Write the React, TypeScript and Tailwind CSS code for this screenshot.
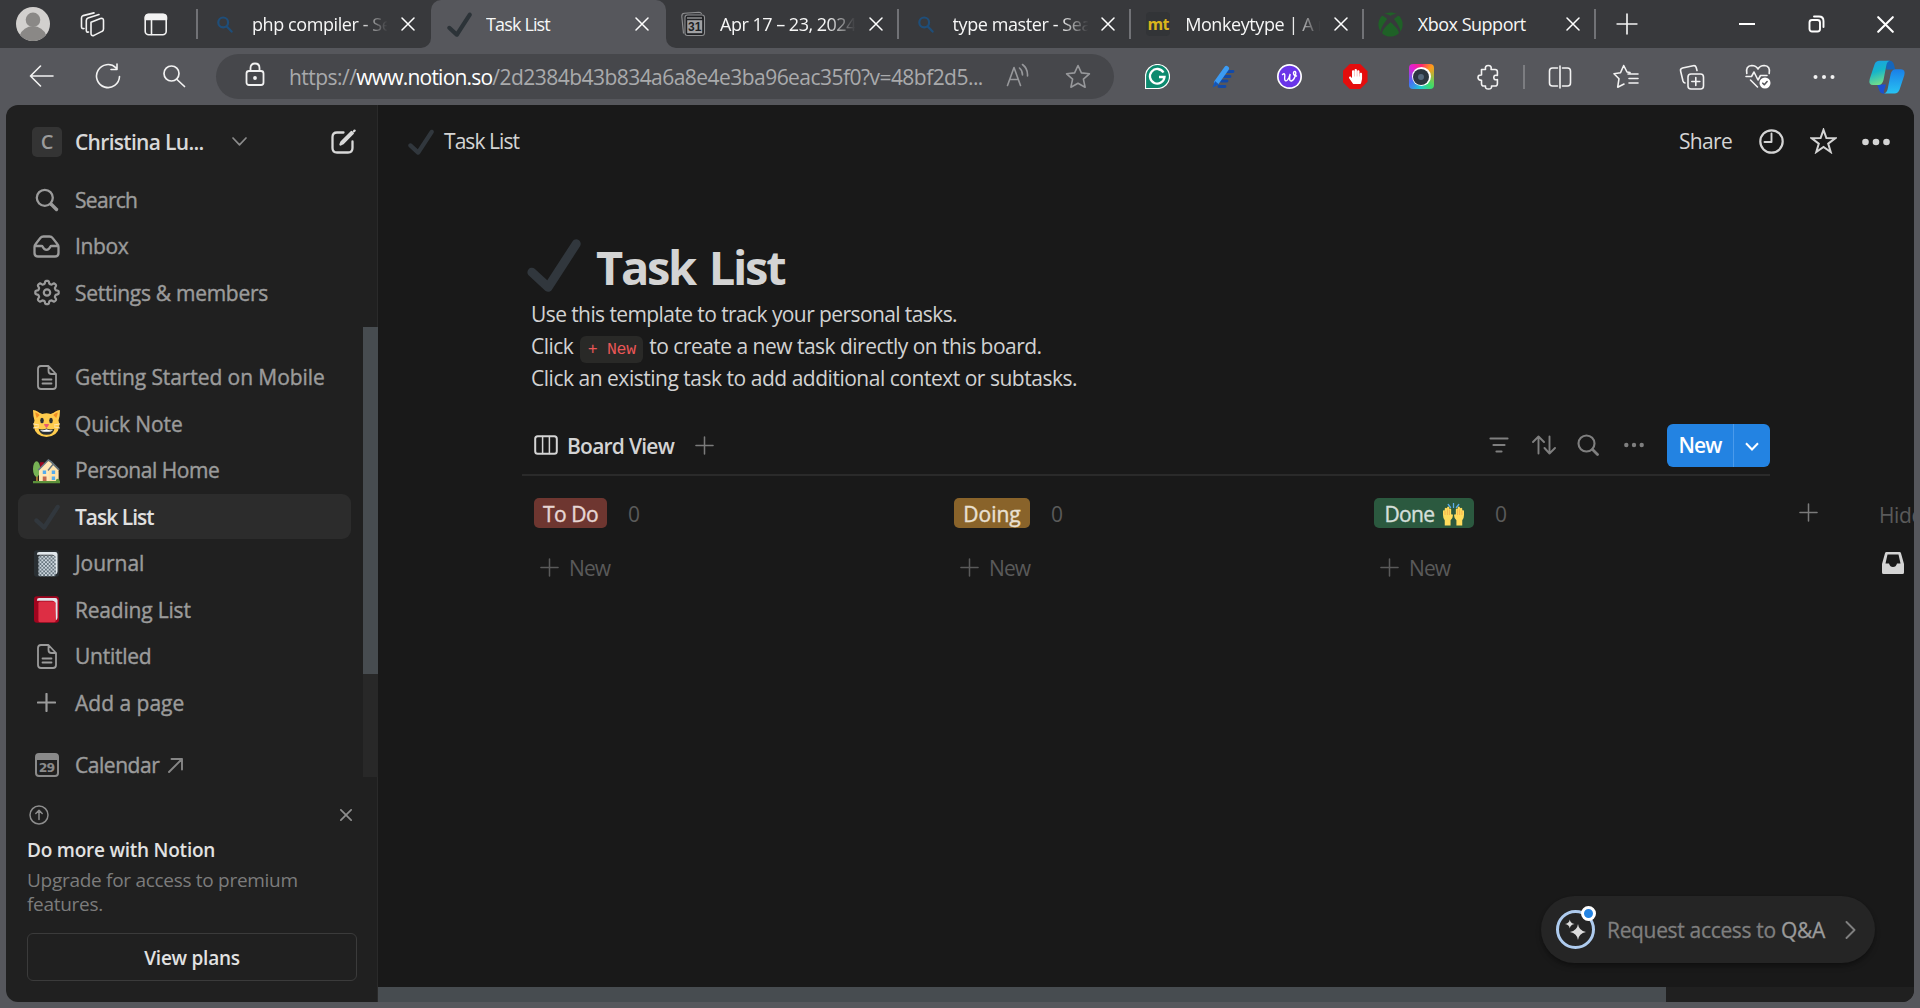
import type { ReactNode } from "react";
import { FaXbox, FaHandPaper } from "react-icons/fa";

type SvgProps = { w: number; h?: number; vb?: string; sw?: number; className?: string; children: ReactNode };

/* Outline icon with round caps; colour follows the current text colour. */
function Line({ w, h = w, vb = `0 0 ${w} ${h}`, sw = 1.6, className = "", children }: SvgProps) {
  return (
    <svg width={w} height={h} viewBox={vb} fill="none" stroke="currentColor" strokeWidth={sw} strokeLinecap="round" strokeLinejoin="round" className={`shrink-0 ${className}`}>
      {children}
    </svg>
  );
}

const Plus = ({ s, sw = 1.6 }: { s: number; sw?: number }) => (
  <Line w={s} vb="0 0 20 20" sw={sw}><path d="M10 1v18M1 10h18" /></Line>
);
const Cross = ({ s, sw = 1.5 }: { s: number; sw?: number }) => (
  <Line w={s} vb="0 0 14 14" sw={sw}><path d="M1 1l12 12M13 1L1 13" /></Line>
);
const Dots = ({ w, r, gap }: { w: number; r: number; gap: number }) => (
  <svg width={w} height={10} viewBox={`${-w / 2} -5 ${w} 10`} fill="currentColor" className="shrink-0">
    <circle cx={-gap} r={r} /><circle r={r} /><circle cx={gap} r={r} />
  </svg>
);
const Check = ({ s, className = "text-[#31373d]" }: { s: number; className?: string }) => (
  <svg width={s} height={s} viewBox="0 0 36 36" className={`shrink-0 ${className}`}>
    <path fill="currentColor" d="M34.459 1.375c-1.391-.902-3.248-.506-4.149.884L13.5 28.17l-8.198-7.58c-1.217-1.125-3.114-1.051-4.239.166-1.125 1.216-1.051 3.115.166 4.239l10.764 9.952s.309.266.452.359c.504.328 1.07.484 1.63.484.982 0 1.945-.482 2.52-1.368L35.343 5.524c.902-1.39.506-3.248-.884-4.149z" />
  </svg>
);

/* ---------- browser chrome ---------- */

const BingSearch = () => (
  <Line w={16} h={17} sw={2.2} className="text-[#1f4e79]"><circle cx="6.2" cy="6.4" r="4.9" /><path d="M9.8 10.4l4.8 5.2" /></Line>
);
const CalendarFav = () => (
  <svg width="26" height="26" viewBox="0 0 26 26" fill="none" stroke="#8e8f91" strokeWidth="1.1" className="shrink-0">
    <path d="M3.5 22.5L1.8 5.5Q1.6 2.5 4.4 2.3L19 1.2q2 0 2.6 1.8" />
    <rect x="5" y="4" width="19.500" height="20.500" rx="2.500" fill="#202124" />
    <path d="M7 7h15" strokeWidth="1.500" />
    <rect x="7.200" y="9.200" width="15" height="13" fill="#a0a1a3" stroke="none" />
    <text x="14.800" y="20.300" textAnchor="middle" fontFamily="Liberation Sans" fontWeight="bold" fontSize="12" fill="#202124" stroke="none">31</text>
  </svg>
);

function Tab({ icon, title, titleClass, active, last }: { icon: ReactNode; title: string; titleClass: string; active?: boolean; last?: boolean }) {
  return (
    <div className={`flex h-12 shrink-0 items-center ${active ? "w-[235px] rounded-t-[10px] bg-[#56575c] pl-px" : "w-[232.6px]"}`}>
      <span className="flex w-[54px] items-center justify-center">{icon}</span>
      <span className={`w-[137px] overflow-hidden whitespace-nowrap text-[18px] leading-6 text-[#f7f7f7] ${titleClass}`}>{title}</span>
      <span className="flex w-[37px] items-center justify-center text-white"><Cross s={14} /></span>
      {!active && <span className={`ml-auto h-[30px] w-[2px] ${last === false ? "" : "bg-[#717276]"}`} />}
    </div>
  );
}

function TabBar() {
  return (
    <div className="flex h-12 bg-[#56575c] text-[#f2f2f2]">
      <div className="flex w-[431px] shrink-0 items-center rounded-br-[10px] bg-[#38393c]">
        <svg width="34" height="34" viewBox="0 0 34 34" className="ml-4 shrink-0">
          <circle cx="17" cy="17" r="17" fill="#d2d0ce" />
          <circle cx="17" cy="12.800" r="7.300" fill="#8a8886" />
          <path d="M4 28a13.500 12 0 0 1 26 0a17 17 0 0 1-26 0z" fill="#8a8886" />
        </svg>
        <Line w={25} h={25} className="ml-[30px]">
          <path d="M11 10.200l9.500-3.600q3-.9 3 1.800v8.500q0 1.800-1.600 2.500l-7.900 4q-3 1-3-1.900z" />
          <path d="M8.500 20q-2.200.6-2.200-2V8.600q0-1.800 1.700-2.500L19 2.500" />
          <path d="M4 16.500q-2.500.6-2.500-2V6q0-1.800 1.700-2.400L14 .9" />
        </Line>
        <Line w={24} h={23} className="ml-[39px]">
          <rect x="1.200" y="1.200" width="21" height="20.500" rx="3.500" /><path d="M1.500 6.500V4.500q0-3 3-3h15q3 0 3 3v2z" fill="currentColor" /><path d="M7.500 7v14.500" />
        </Line>
        <span className="ml-[28px] h-[30px] w-[2px] bg-[#717276]" />
        <Tab icon={<BingSearch />} title="php compiler - Search" titleClass="tracking-[-0.42px] [mask-image:linear-gradient(to_right,#000_78%,transparent_99%)]" last={false} />
      </div>
      <div className="w-[235px] shrink-0 bg-linear-to-b from-[#38393c] from-50% to-[#56575c] to-50%">
        <Tab active icon={<Check s={25} className="text-[#2c3338]" />} title="Task List" titleClass="tracking-[-0.85px]" />
      </div>
      <div className="flex flex-1 items-center rounded-bl-[10px] bg-[#38393c]">
        <Tab icon={<CalendarFav />} title="Apr 17 – 23, 2024" titleClass="tracking-[-0.5px] [mask-image:linear-gradient(to_right,#000_78%,transparent_99%)]" />
        <Tab icon={<BingSearch />} title="type master - Search" titleClass="tracking-[-0.41px] [mask-image:linear-gradient(to_right,#000_78%,transparent_99%)]" />
        <Tab icon={<span className="flex size-6 items-center justify-center rounded bg-[#323437] text-[16px] font-bold tracking-[-0.6px] text-[#d9b51c]">mt</span>} title="Monkeytype | A minimalistic" titleClass="tracking-[-0.42px] [mask-image:linear-gradient(to_right,#000_78%,transparent_99%)]" />
        <Tab icon={<FaXbox size={25} className="text-[#1f6127]" />} title="Xbox Support" titleClass="tracking-[-0.49px]" />
        <span className="ml-[20px] flex"><Plus s={22} sw={1.5} /></span>
        <div className="ml-auto flex items-center text-white">
          <span className="mr-[53px] h-[2px] w-4 bg-white" />
          <Line w={18} h={18} sw={1.9} className="mr-[51px]"><rect x="1.500" y="5" width="10.500" height="11.500" rx="2.500" /><path d="M6 1.500h5q4.500 0 4.500 4.500v6" /></Line>
          <span className="mr-[26px] flex"><Cross s={17} sw={1.7} /></span>
        </div>
      </div>
    </div>
  );
}

const Cell = ({ children }: { children: ReactNode }) => <span className="flex w-[66px] shrink-0 items-center justify-center">{children}</span>;

function Toolbar() {
  return (
    <div className="flex h-[57px] items-center bg-[#56575c] text-[#f2f2f2]">
      <span className="flex w-[216px] shrink-0">
        <Line w={25} h={22} className="ml-[29px]"><path d="M24 11H1.500M11.500 1L1.500 11l10 10" /></Line>
        <Line w={26} h={26} className="-mt-0.5 ml-[41px]"><path d="M24.500 13.500A11.500 11.500 0 1 1 21 4.800M22 1v5.500h-6" /></Line>
        <Line w={24} h={24} sw={1.7} className="-mt-px ml-[41px]"><circle cx="9.500" cy="9.500" r="7.500" /><path d="M15 15.500l7.500 7" /></Line>
      </span>
      <div className="flex h-[45px] w-[898px] shrink-0 items-center rounded-full bg-[#46474b]">
        <Line w={20} h={25} sw={1.8} className="-mt-1 ml-[29px]"><rect x="1.500" y="9" width="17" height="14" rx="2.500" /><path d="M5.500 9V6q0-4.500 4.500-4.500T14.500 6v3" /><circle cx="10" cy="16" r="1" fill="currentColor" /></Line>
        <span className="ml-[24px] w-[717px] whitespace-nowrap text-[21px] leading-8 tracking-[-0.54px] text-[#a9aaac]">
          https://<span className="tracking-[-0.79px] text-white">www.notion.so</span>/2d2384b43b834a6a8e4e3ba96eac35f0?v=48bf2d5...
        </span>
        <Line w={24} h={24} className="-mt-1 text-[#97989b]"><path d="M1.500 22.500L8 4.500l6.500 18M3.800 16.500h8.600M13.500 5q3 2.500 3 7M16.500 1.500Q22 5.500 21.500 13" /></Line>
        <Line w={26} h={25} className="-mt-px ml-[35px] text-[#97989b]"><path d="M13 1.500l3.400 7.400 8 .9-6 5.400 1.700 8L13 19.200l-7.100 4 1.700-8-6-5.400 8-.9z" /></Line>
      </div>
      <div className="flex flex-1 items-center pl-[10px]">
        <Cell>
          <svg width="25" height="25" viewBox="0 0 25 25"><path d="M12.500.5a12 12 0 1 1 0 24H.5v-12a12 12 0 0 1 12-12z" fill="#0d8a6f" stroke="#fff" strokeWidth="1.200" /><path d="M18.500 8.500a7.300 7.300 0 1 0 1 4.500h-5.500" fill="none" stroke="#fff" strokeWidth="2.300" /></svg>
        </Cell>
        <Cell>
          <svg width="24" height="24" viewBox="0 0 24 24"><path d="M15 6.500h7M13 11.500h6M10 16h6M8 21.500h6" stroke="#124aa8" strokeWidth="2.800" strokeLinecap="round" /><path d="M15.500 3.500L5.500 17.500" stroke="#3b9bf4" strokeWidth="5" strokeLinecap="round" /><path d="M4 16l4 3.500-6.500 3z" fill="#1556b8" /></svg>
        </Cell>
        <Cell>
          <svg width="25" height="25" viewBox="0 0 25 25"><circle cx="12.500" cy="12.500" r="12.500" fill="#fff" /><circle cx="12.500" cy="12.500" r="10.800" fill="#6a35e8" /><path d="M5.500 10.500q2.500-2 2.300 1.500c-.8 6 1.800 6.500 4.200 1.500q1-2.500 1.200-3.500c-1.200 5-.5 7.500 1.300 7 3-1 5.500-8.500 3.500-9.500-2-.5-2.500 4 1.500 4.500" fill="none" stroke="#fff" strokeWidth="1.400" strokeLinecap="round" /></svg>
        </Cell>
        <Cell>
          <span className="flex size-[25px] items-center justify-center bg-[#e40d0d] text-white [clip-path:polygon(29%_0,71%_0,100%_29%,100%_71%,71%_100%,29%_100%,0_71%,0_29%)]"><FaHandPaper size={15} /></span>
        </Cell>
        <Cell>
          <span className="flex size-[25px] items-center justify-center rounded bg-[conic-gradient(from_45deg,#ff9a1a,#3ddc6a_25%,#1fc8d8_40%,#4a6cf5_55%,#e31fd0_75%,#ff2a6a_88%,#ff9a1a)]">
            <span className="flex size-[19px] items-center justify-center rounded-full bg-white"><span className="flex size-[16px] items-center justify-center rounded-full bg-[#2c3640]"><span className="size-[6px] rounded-full bg-[#56697c]" /></span></span>
          </span>
        </Cell>
        <Cell>
          <Line w={24} h={26} className="ml-[3px]"><path d="M4.500 5.500h4q-.8-4 2.800-4t2.800 4h4q2.300 0 2.300 2.300v3.700q-3.600-1-3.600 2t3.600 2v4.200q0 2.300-2.300 2.300h-3.600q.6 3-3 3t-3-3H6.800q-2.300 0-2.300-2.300v-3.500Q1 16.200 1 13.500t3.500-2.500z" /></Line>
        </Cell>
        <span className="mr-0.5 ml-[3px] h-6 w-[2px] bg-[#7c7d81]" />
        <Cell><Line w={24} h={24}><path d="M9.500 3H4.500q-3 0-3 3v12q0 3 3 3h5M14.500 3h5q3 0 3 3v12q0 3-3 3h-5M12 1v22" /></Line></Cell>
        <Cell><Line w={26} h={25}><path d="M17 8.500l-3-.5-3.300-6.500L7.500 8.800l-6.500.9 5 5-1.300 8.500 6.300-3.200M15 10h10M16 14.500h9M16 19h9" /></Line></Cell>
        <Cell><Line w={26} h={26}><rect x="9" y="10" width="15.500" height="15" rx="3" /><path d="M16.800 13.500v8M12.800 17.500h8M18 6.500l-.8-3q-.7-2.300-3-1.800L3.500 4Q1 4.800 1.600 7l2.400 10q.5 1.800 2 2" /></Line></Cell>
        <Cell>
          <Line w={26} h={25}><path d="M1.800 9.500q-1.500-7.500 5-8Q11 1.500 13 5q2-3.500 6.200-3.500 6.500.5 5 8M1 12.500h5.500L9 8l4 8 2.500-4.500H22M5.500 16l7 7" /><circle cx="20" cy="19" r="5.500" fill="#fff" stroke="none" /><path d="M17.800 19.200l1.500 1.500 2.800-3.200" stroke="#56575c" /></Line>
        </Cell>
        <Cell><Dots w={26} r={2} gap={8.500} /></Cell>
        <span className="flex w-[60px] shrink-0 items-center justify-center">
          <svg width="38" height="34" viewBox="0 0 38 34">
            <defs>
              <linearGradient id="cpA" x1="0" y1="0" x2=".3" y2="1"><stop offset="0" stopColor="#1b9de8" /><stop offset=".5" stopColor="#16b6c9" /><stop offset="1" stopColor="#6fdc8c" /></linearGradient>
              <linearGradient id="cpB" x1="0" y1="0" x2="0" y2="1"><stop offset="0" stopColor="#1a7fe8" /><stop offset="1" stopColor="#27c3f3" /></linearGradient>
            </defs>
            <path d="M18 .8h4q3 .3 4 4l1.300 4.700h-9z" fill="#1566bb" />
            <path d="M9 24.500h9l-2 6q-.8 3 2 3h-3q-3 0-4-4z" fill="#1c50cf" />
            <path d="M11.500.8H22q-2.800.6-3.600 4.200L15.500 20q-1.300 5-5 5H5q-4.700 0-3.300-6L6.500 4.500Q7.800.8 11.500.8z" fill="url(#cpA)" />
            <path d="M26.500 33.500H16q2.800-.6 3.600-4.200l3-15q1.200-5 5-5H33q4.700 0 3.300 6l-4.800 14.500q-1.300 3.700-5 3.700z" fill="url(#cpB)" />
          </svg>
        </span>
      </div>
    </div>
  );
}

/* ---------- sidebar ---------- */

const GEAR = Array.from({ length: 145 }, (_, i) => {
  const a = (i / 144) * Math.PI * 2;
  const r = 10.3 + 1.45 * Math.tanh(2.2 * Math.cos(8 * a));
  return `${i ? "L" : "M"}${(13 + r * Math.sin(a)).toFixed(2)} ${(13.5 - r * Math.cos(a)).toFixed(2)}`;
}).join("");

const PageIcon = () => (
  <Line w={20} h={25} sw={1.8}><path d="M4 1h7.500l7.500 8v12q0 3-3 3H4q-3 0-3-3V4q0-3 3-3zM11.500 1.500V6q0 3 3 3H19M5.500 14.500h9M5.500 18.500h9" /></Line>
);
const CatIcon = () => (
  <svg width="27" height="27" viewBox="0 0 36 36">
    <path d="M1 1q5 0 10 4.500L5 14Q1 8 1 1zM35 1q-5 0-10 4.500L31 14q4-6 4-13z" fill="#f18f26" />
    <path d="M0 0q3 0 7.500 3.200l5 2Q18 3.500 23.500 5.200l5-2Q33 0 36 0q0 8-2 14 1.500 4 1 8-2 13-17 14Q3 35 1 22q-.5-4 1-8Q0 8 0 0zm3 3q.3 4 2 7.500L9 6.500Q6 4 3 3zm30 0q-3 1-6 3.500l4 4Q32.700 7 33 3z" fill="#ffcc4d" />
    <ellipse cx="12" cy="14" rx="2.400" ry="3.700" fill="#292f33" /><ellipse cx="24" cy="14" rx="2.400" ry="3.700" fill="#292f33" />
    <path d="M15.500 19.500h5L18 23z" fill="#e75a70" stroke="#e75a70" strokeLinejoin="round" strokeWidth="1.500" />
    <path d="M7.500 25q5 2 10.500-.5 5.500 2.500 10.500.5-1 8-10.500 8T7.500 25z" fill="#292f33" />
    <path d="M9.500 26.500q4.500 1 8.500-1 4 2 8.500 1-1 2.500-8.500 2.500t-8.500-2.500z" fill="#fff" />
    <path d="M0 18.500l8 1.500M0 24l8-1.500M36 18.500L28 20M36 24l-8-1.500" stroke="#fee7b8" strokeWidth="1.300" />
  </svg>
);
const HouseIcon = () => (
  <svg width="27" height="27" viewBox="0 0 36 36">
    <path d="M4 22h2.500v11H4z" fill="#a0702c" /><ellipse cx="4.800" cy="16" rx="4.800" ry="10.500" fill="#77b255" />
    <path d="M9.500 7h5v8h-5z" fill="#a0041e" />
    <path d="M8 16L19 5l3.500 1L34 17.500V33H8z" fill="#ffe8b6" />
    <path d="M21 19l5-6.500 8 7.500v13H21z" fill="#ffdb9a" opacity=".5" />
    <path d="M7 17.500L20.500 4l4 2.500L35 17M20 18l6.500-8" fill="none" stroke="#66757f" strokeWidth="1.900" />
    <path d="M13 18h4.500v4.500H13zM25 18h4.500v4.500H25zM25 26h4.500v4.500H25z" fill="#55acee" />
    <path d="M13 26h5v7h-5z" fill="#c1694f" /><path d="M0 32h36v3H0z" fill="#5c913b" /><circle cx="33" cy="31.500" r="2.500" fill="#5c913b" />
  </svg>
);
function BookIcon({ journal }: { journal?: boolean }) {
  return (
    <svg width="25" height="27" viewBox="0 0 34 36">
      <defs>
        <pattern id="weave" width="5" height="5" patternUnits="userSpaceOnUse"><path fill="#ccd6dd" d="M0 0h5v5H0z" /><path fill="#66757f" d="M0 0h2.500v2.500H0zM2.500 2.500H5V5H2.500z" /></pattern>
      </defs>
      <rect x="0" y="0" width="34" height="36" rx="4" fill={journal ? "#292f33" : "#a0041e"} />
      <path d="M4 5.500Q4 2.500 7 2.500h22q3 0 3 3V29q0 3-2.500 4L28 8.500Q28 6 25 6H4z" fill="#e1e8ed" />
      <rect x="6" y="7" width="23.500" height="28.500" rx="2.500" fill={journal ? "url(#weave)" : "#dd2e44"} />
    </svg>
  );
}

function Row({ icon, label, cls = "", active, after }: { icon: ReactNode; label: string; cls?: string; active?: boolean; after?: ReactNode }) {
  return (
    <div className={`mb-[1.5px] flex h-[45px] w-[333px] items-center rounded-[9px] text-[21px] leading-[30px] whitespace-nowrap ${active ? "bg-[#2c2c2c] font-semibold text-[#e0e0e0]" : "text-[#9b9b9b] [-webkit-text-stroke:0.4px_#9b9b9b]"}`}>
      <span className="flex w-[57px] shrink-0 items-center justify-center">{icon}</span>
      <span className={cls}>{label}</span>
      {after}
    </div>
  );
}

function Sidebar() {
  return (
    <aside className="flex w-[372px] shrink-0 flex-col border-r border-[#2a2a2a] bg-[#202020]">
      <div className="flex h-[72px] items-center pl-[26px]">
        <span className="mt-0.5 flex size-[30px] items-center justify-center rounded-[5px] bg-[#343434] text-[20px] font-semibold text-[#9b9b9b]">C</span>
        <span className="mt-[3px] ml-[13px] text-[21px] font-semibold tracking-[-0.69px] text-[#d8d8d8]">Christina Lu...</span>
        <Line w={15} h={9} sw={1.7} className="mt-px ml-[28px] text-[#8b8b8b]"><path d="M1 1l6.500 6.800L14 1" /></Line>
        <Line w={25} h={25} sw={2.300} className="ml-[84px] text-[#d8d8d8]"><path d="M12.500 3.500H6q-4.500 0-4.500 4.500v11q0 4.500 4.500 4.500h11q4.500 0 4.500-4.500v-6.500M9.500 15.500l1-2.500L20.500 3l1.300 1.300L12 14.300z" /><path d="M23 2.300l.6-.7" /></Line>
      </div>
      <div className="pl-3">
        <Row icon={<Line w={24} h={24} sw={2.300}><circle cx="9.800" cy="9.800" r="8" /><path d="M16 16l5.500 5.500" strokeWidth="3.400" /></Line>} label="Search" cls="tracking-[-0.7px]" />
        <Row icon={<Line w={27} h={23} sw={2.300}><path d="M1.500 12v6q0 3.500 3.500 3.500h17q3.500 0 3.500-3.500v-6q0-1.500-1-2.700l-4.800-6.200Q18.500 1.500 16.500 1.500h-6Q8.500 1.500 7.300 3L2.500 9.300q-1 1.200-1 2.700zM2 11h6.500q.8 0 1.200.8 1.300 3 3.800 3t3.800-3q.4-.8 1.200-.8H25" /></Line>} label="Inbox" cls="tracking-[-0.4px]" />
        <Row icon={<Line w={26} h={27} sw={2.200}><path d={GEAR} /><circle cx="13" cy="13.500" r="3.200" /></Line>} label="Settings & members" cls="tracking-[-0.28px]" />
      </div>
      <div className="mt-[10px] flex h-[450px] justify-between pl-3">
        <div className="pt-[28px]">
          <Row icon={<PageIcon />} label="Getting Started on Mobile" cls="tracking-[-0.08px]" />
          <Row icon={<CatIcon />} label="Quick Note" cls="tracking-[-0.12px]" />
          <Row icon={<HouseIcon />} label="Personal Home" cls="tracking-[-0.46px]" />
          <Row active icon={<Check s={26} />} label="Task List" cls="tracking-[-1px]" />
          <Row icon={<BookIcon journal />} label="Journal" cls="tracking-[-0.03px]" />
          <Row icon={<BookIcon />} label="Reading List" cls="tracking-[-0.2px]" />
          <Row icon={<PageIcon />} label="Untitled" cls="tracking-[-0.25px]" />
          <Row icon={<Plus s={19} sw={2.300} />} label="Add a page" />
          <div className="h-[16px]" />
          <Row
            icon={
              <svg width="24" height="24" viewBox="0 0 24 24" className="[-webkit-text-stroke:0]"><rect x="1" y="1" width="22" height="22" rx="3" fill="none" stroke="#8a8a8a" strokeWidth="2" /><path d="M1 1h22v6H1z" fill="#8a8a8a" /><text x="11.500" y="19" textAnchor="middle" fontFamily="DejaVu Sans" fontWeight="bold" fontSize="12.500" letterSpacing="-1" fill="#8a8a8a">29</text></svg>
            }
            label="Calendar"
            cls="tracking-[-0.45px]"
            after={<Line w={15} h={15} sw={1.900} className="ml-[9px] text-[#868686]"><path d="M1 14L14 1M3.500 1H14v10.500" /></Line>}
          />
        </div>
        <div className="-mr-px w-[15px] bg-[#282828]"><div className="h-[347px] bg-[#474c50]" /></div>
      </div>
      <div className="flex flex-1 flex-col pt-[28px] pr-[14px] pl-[21px]">
        <div className="flex h-5 items-center justify-between pr-[11px] pl-[2px] text-[#8d8d8d]">
          <Line w={20} h={20} sw={1.500}><circle cx="10" cy="10" r="9" /><path d="M10 14.500v-9M6.800 8.500L10 5.300l3.200 3.200" /></Line>
          <Cross s={12} sw={2} />
        </div>
        <p className="mt-[12px] text-[19px] leading-[26px] font-semibold tracking-[-0.23px] text-[#e2e2e2]">Do more with Notion</p>
        <p className="mt-[5px] text-[19px] leading-6 tracking-[-0.29px] text-[#7c7c7c]">Upgrade for access to premium<br />features.</p>
        <button className="mt-[17px] flex h-12 w-[330px] items-center justify-center rounded-[6px] border border-[#3b3b3b] pt-[3px] text-[19px] font-semibold tracking-[-0.25px] text-[#e2e2e2]">View plans</button>
      </div>
    </aside>
  );
}

/* ---------- main panel ---------- */

const Hands = () => (
  <svg width="21" height="24" viewBox="0 0 36 40" className="shrink-0">
    <path d="M9 2l4 5M18 0v7M27 2l-4 5" stroke="#5dadec" strokeWidth="2.200" strokeLinecap="round" />
    <path d="M3 38V29Q0 26 0 20v-7q2-3 3 0V9q2-3 4 0V7q2-3 4 0v3q2-2 3 0v9q3-1 3 2 0 5-4 8v9zM33 38V29q3-3 3-9v-7q-2-3-3 0V9q-2-3-4 0V7q-2-3-4 0v3q-2-2-3 0v9q-3-1-3 2 0 5 4 8v9z" fill="#ffdc5d" />
    <path d="M3.500 13v7M7.500 10v10M11 11v9M32.500 13v7M28.500 10v10M25 11v9" stroke="#ef9645" strokeWidth="1" />
  </svg>
);

function Column({ tag, tagClass, emoji }: { tag: string; tagClass: string; emoji?: ReactNode }) {
  return (
    <div className="w-[420px] shrink-0">
      <div className="flex h-[30px] items-center text-[21px]">
        <span className={`flex h-[30px] items-center justify-center gap-2 rounded-[5px] pt-[3px] [-webkit-text-stroke:0.4px] ${tagClass}`}>{tag}{emoji}</span>
        <span className="mt-[3px] ml-[21px] text-[#5a5a5a]">0</span>
      </div>
      <div className="mt-[24px] flex h-[32px] items-center gap-[10px] pl-[6px] text-[21px] text-[#5a5a5a]">
        <span className="-mt-0.5 flex"><Plus s={19} /></span><span className="mt-px tracking-[-0.9px]">New</span>
      </div>
    </div>
  );
}

function Main() {
  return (
    <main className="flex min-w-0 flex-1 flex-col bg-[#191919]">
      <div className="flex h-[73px] items-center pr-[23px] pl-[30px] text-[#d4d4d4]">
        <Check s={26} />
        <span className="mt-px ml-[10px] text-[21px] tracking-[-0.94px]">Task List</span>
        <span className="mt-px mr-[27px] ml-auto text-[21px] tracking-[-0.68px]">Share</span>
        <Line w={25} h={25} sw={2.200}><circle cx="12.500" cy="12.500" r="11.200" /><path d="M12.500 4.500V13H5.500" strokeWidth="1.900" /></Line>
        <Line w={27} h={26} sw={2} className="-mt-px ml-[26px]"><path d="M13.500 1.800l2.900 8.300 8.800.2-7 5.300 2.500 8.400-7.200-5-7.200 5 2.500-8.400-7-5.300 8.800-.2z" strokeLinejoin="miter" /></Line>
        <span className="ml-[24px] flex"><Dots w={30} r={3.300} gap={10.500} /></span>
      </div>

      <div className="flex flex-1 flex-col overflow-hidden pl-[144px]">
        <div className="mt-[54px] flex h-[66px] items-center pl-[5px]">
          <Check s={54} className="-mt-px text-[#31373d]" />
          <h1 className="mt-[3px] ml-[15px] text-[47px] leading-[66px] font-bold tracking-[-2.3px] [word-spacing:4px] whitespace-nowrap text-[#d4d4d4]">Task List</h1>
        </div>
        <div className="mt-px pl-[9px] text-[21px] leading-[31.5px] whitespace-nowrap text-[#d2d2d2]">
          <p className="tracking-[-0.59px]">Use this template to track your personal tasks.</p>
          <p className="flex tracking-[-0.52px]">
            Click
            <code className="mt-[5px] mr-[6px] ml-[7px] flex h-[27px] w-[63px] items-center justify-center rounded-[6px] bg-[#292927] pt-[2px] font-['Liberation_Mono'] text-[16.5px] tracking-[-0.3px] text-[#eb5757]">+ New</code>
            to create a new task directly on this board.
          </p>
          <p className="tracking-[-0.48px]">Click an existing task to add additional context or subtasks.</p>
        </div>

        <div className="mt-[22px] flex h-[60px] w-[1248px] items-center border-b-2 border-[#2a2a2a] pl-3">
          <Line w={24} h={20} sw={2} className="text-[#d4d4d4]"><rect x="1.200" y="1.200" width="21.600" height="17.500" rx="2.500" /><path d="M8.600 1.500v17M15.400 1.500v17" strokeWidth="1.500" /></Line>
          <span className="mt-[4px] ml-[9px] text-[21px] font-semibold tracking-[-0.76px] text-[#d4d4d4]">Board View</span>
          <span className="mt-px ml-[21px] flex text-[#7b7b7b]"><Plus s={19} /></span>
          <div className="ml-auto flex items-center text-[#7f7f7f]">
            <Line w={20} h={16} sw={2.200}><path d="M1.500 1.500h17M4.500 8h11M7.500 14.500h5" /></Line>
            <Line w={24} h={20} sw={1.900} className="ml-[23px]"><path d="M6.500 18.500v-17M1 7l5.500-5.500L12 7M17.500 1.500v17M12.500 13l5 5.500 5.500-5.500" /></Line>
            <Line w={22} h={22} sw={2.100} className="ml-[21px]"><circle cx="9.500" cy="9.500" r="8" /><path d="M15.500 15.500l5 5" strokeWidth="2.800" /></Line>
            <span className="ml-[24px] flex"><Dots w={22} r={2.200} gap={7.700} /></span>
            <div className="ml-[22px] flex h-[43px] w-[103px] items-center rounded-[6px] bg-[#2383e2] text-white">
              <span className="mt-px w-[66px] text-center text-[21px] font-semibold tracking-[-0.9px]">New</span>
              <span className="flex h-full flex-1 items-center justify-center border-l border-[#4a9aeb] pt-[3px]"><Line w={14} h={9} sw={2}><path d="M1 1.200l6 6.300 6-6.300" strokeLinecap="butt" strokeLinejoin="miter" /></Line></span>
            </div>
          </div>
        </div>

        <div className="mt-[22px] flex pl-3">
          <Column tag="To Do" tagClass="w-[73px] bg-[#6e3630] text-[#e6d6d4] tracking-[-0.5px]" />
          <Column tag="Doing" tagClass="w-[76px] bg-[#89632a] text-[#e9e0d2]" />
          <Column tag="Done" emoji={<Hands />} tagClass="w-[100px] bg-[#2b593f] text-[#d5dfd9] tracking-[-0.6px]" />
          <div className="mt-[5px] ml-[5px] w-[80px] shrink-0 text-[#7b7b7b]"><Plus s={19} /></div>
          <div className="mt-[2px] shrink-0 text-[21px] leading-[30px] tracking-[-0.4px] text-[#5a5a5a]">
            Hidden
            <svg width="22" height="22" viewBox="0 0 22 22" className="mt-[22px] ml-[3px] block"><path d="M4.500 0h13q1.200 0 1.500 1.200L22 12v8.500q0 1.500-1.500 1.500h-19Q0 22 0 20.500V12L3 1.200Q3.300 0 4.500 0zm1 2.500L3.500 11.500H7q1 3.500 4 3.500t4-3.500h3.500l-2-9z" fill="#d4d4d4" fillRule="evenodd" /></svg>
          </div>
        </div>

        <div className="mt-auto mr-[39px] mb-6 ml-auto flex h-[67px] w-[334px] items-center rounded-full bg-[#252525] pl-[15px] shadow-md shadow-black/30">
          <span className="relative flex size-[39px] items-center justify-center rounded-full border-[3px] border-[#aecbee]">
            <svg width="21" height="21" viewBox="0 0 21 21" fill="#dcdcdc"><path d="M13 5q.8 6.500 8 8-7.200 1.500-8 8-.8-6.500-8-8 7.200-1.500 8-8zM4.800.5q.5 3.800 4.800 4.500-4.300.7-4.800 4.500Q4.300 5.700 0 5 4.300 4.300 4.800.5z" /></svg>
            <span className="absolute -top-[7px] -right-[4px] size-[15px] rounded-full border-[3px] border-white bg-[#2383e2]" />
          </span>
          <span className="mt-[3px] ml-[12px] text-[21px] tracking-[-0.33px] whitespace-nowrap text-[#7f7f7f] [-webkit-text-stroke:0.3px]">Request access to <span className="text-[#9b9b9b]">Q&amp;A</span></span>
          <Line w={11} h={18} sw={1.900} className="ml-[20px] text-[#7f7f7f]"><path d="M1.500 1l8 8-8 8" /></Line>
        </div>
      </div>
      <div className="h-[15px] bg-[#202020]"><div className="h-full w-[1288px] bg-[#474c50]" /></div>
    </main>
  );
}

export default function App() {
  return (
    <div className="flex h-[1008px] w-[1920px] flex-col overflow-hidden bg-[#56575c] font-['Open_Sans','Noto_Sans',sans-serif]">
      <TabBar />
      <Toolbar />
      <div className="mx-[6px] flex h-[897px] overflow-hidden rounded-[12px]">
        <Sidebar />
        <Main />
      </div>
    </div>
  );
}
